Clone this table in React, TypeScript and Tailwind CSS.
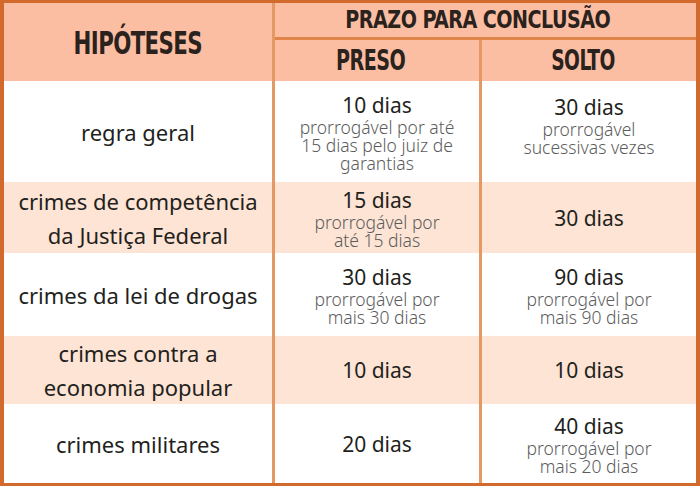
const rows = [
  {
    label: ['regra geral'],
    h: 'h-[101px]',
    bg: 'bg-white',
    preso: { main: '10 dias', sub: ['prorrogável por até', '15 dias pelo juiz de', 'garantias'] },
    solto: { main: '30 dias', sub: ['prorrogável', 'sucessivas vezes'] },
    soltoPad: 'pb-[14px]',
  },
  {
    label: ['crimes de competência', 'da Justiça Federal'],
    h: 'h-[71px]',
    bg: 'bg-[#fde4d4]',
    preso: { main: '15 dias', sub: ['prorrogável por', 'até 15 dias'] },
    solto: { main: '30 dias', sub: [] },
    soltoPad: '',
  },
  {
    label: ['crimes da lei de drogas'],
    h: 'h-[83px]',
    bg: 'bg-white',
    preso: { main: '30 dias', sub: ['prorrogável por', 'mais 30 dias'] },
    solto: { main: '90 dias', sub: ['prorrogável por', 'mais 90 dias'] },
    soltoPad: '',
  },
  {
    label: ['crimes contra a', 'economia popular'],
    h: 'h-[68px]',
    bg: 'bg-[#fde4d4]',
    preso: { main: '10 dias', sub: [] },
    solto: { main: '10 dias', sub: [] },
    soltoPad: '',
  },
  {
    label: ['crimes militares'],
    h: 'h-[79px]',
    bg: 'bg-white',
    preso: { main: '20 dias', sub: [] },
    solto: { main: '40 dias', sub: ['prorrogável por', 'mais 20 dias'] },
    soltoPad: '',
  },
]

const head = { fontFamily: '"Liberation Sans Narrow", "DejaVu Sans Condensed", sans-serif' }
const body = { fontFamily: '"Noto Sans", "Open Sans", sans-serif' }

function Cell({ main, sub }: { main: string; sub: string[] }) {
  return (
    <div className="flex flex-col items-center justify-center text-center">
      <div className="text-[21px] leading-[26px] text-[#231f1c]">{main}</div>
      {sub.map((s) => (
        <div key={s} className="text-[17.5px] leading-[18px] font-light text-[#5c5c5c] whitespace-nowrap">
          {s}
        </div>
      ))}
    </div>
  )
}

export default function App() {
  return (
    <div
      className="w-[700px] h-[486px] bg-white border-x-4 border-y-[3px] border-[#d2692d] flex flex-col overflow-hidden"
      style={body}
    >
      {/* Header */}
      <div className="h-[78px] grid grid-cols-[271px_1fr] bg-[#fcbea3] text-[#2a221d]" style={head}>
        <div className="border-r-[3px] border-[#e49964] flex items-center justify-center">
          <span className="text-[32px] font-bold scale-x-[0.74] tracking-tight">HIPÓTESES</span>
        </div>
        <div className="flex flex-col">
          <div className="h-[37px] border-b-[3px] border-[#e0854a] flex items-center justify-center pr-4">
            <span className="text-[25px] font-bold scale-x-[0.85] whitespace-nowrap tracking-tight">PRAZO PARA CONCLUSÃO</span>
          </div>
          <div className="flex-1 grid grid-cols-[207px_1fr]">
            <div className="border-r-[3px] border-[#e49964] flex items-center justify-center pr-3">
              <span className="text-[28px] font-bold scale-x-[0.76] tracking-tight">PRESO</span>
            </div>
            <div className="flex items-center justify-center pr-3">
              <span className="text-[28px] font-bold scale-x-[0.74] tracking-tight">SOLTO</span>
            </div>
          </div>
        </div>
      </div>

      {/* Body */}
      {rows.map((r, i) => (
        <div key={i} className={`grid grid-cols-[271px_207px_1fr] ${r.h} ${r.bg}`}>
          <div className="border-r-[3px] border-[#e49964] flex flex-col items-center justify-center text-center">
            {r.label.map((l) => (
              <div key={l} className="text-[22px] leading-[34px] text-[#231f1c] whitespace-nowrap">
                {l}
              </div>
            ))}
          </div>
          <div className="border-r-[3px] border-[#e49964] flex justify-center">
            <Cell main={r.preso.main} sub={r.preso.sub} />
          </div>
          <div className={`flex justify-center ${r.soltoPad}`}>
            <Cell main={r.solto.main} sub={r.solto.sub} />
          </div>
        </div>
      ))}
    </div>
  )
}
